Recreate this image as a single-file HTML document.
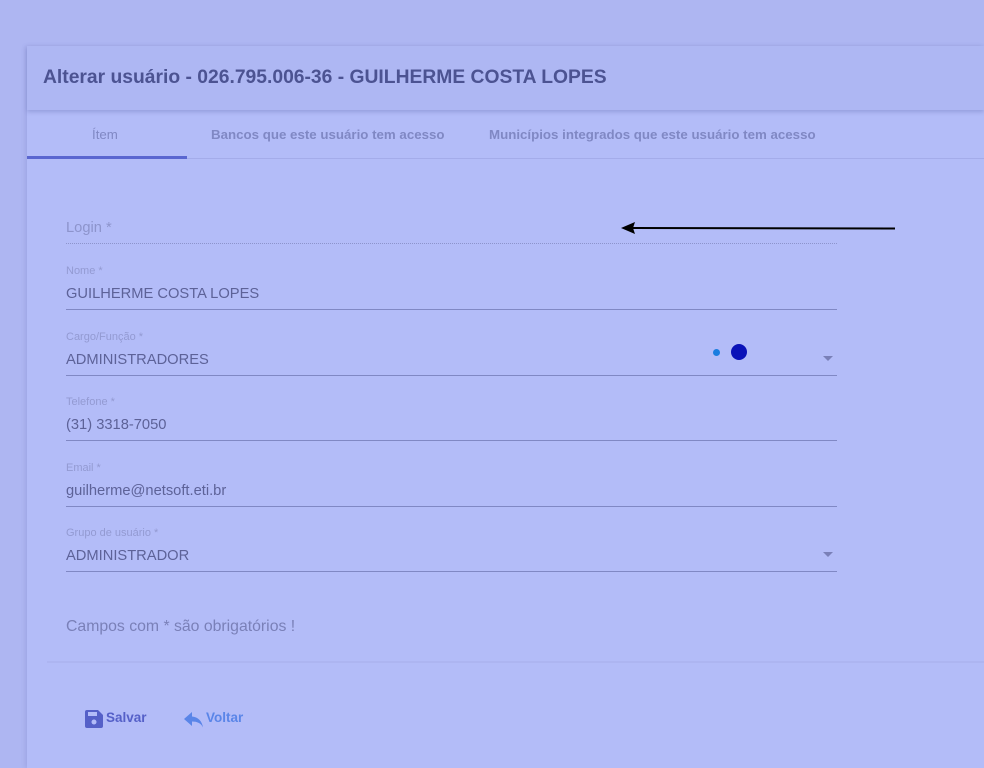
<!DOCTYPE html>
<html><head><meta charset="utf-8"><style>
*{margin:0;padding:0;box-sizing:border-box}
body{width:984px;height:768px;background:#aeb6f2;font-family:"Liberation Sans",sans-serif;position:relative;overflow:hidden}
.card{position:absolute;left:27px;top:46px;width:957px;height:722px;background:#b3bcf8;box-shadow:-2px 0 4px rgba(80,90,160,.15)}
.hdr{position:absolute;left:27px;top:46px;width:957px;height:64px;background:#aeb7f3;box-shadow:0 2px 4px rgba(80,90,160,.3)}
.hdr h1{position:absolute;left:16px;top:21px;font-size:19.3px;font-weight:bold;color:#4c5392}
.tab{position:absolute;top:127px;font-size:13.3px;font-weight:bold;color:#8088c4}
.tabline{position:absolute;left:27px;top:158px;width:957px;height:1px;background:#a4acea}
.tabact{position:absolute;left:27px;top:156px;width:160px;height:3px;background:#5a66d0}
.lbl{position:absolute;left:66px;font-size:11px;color:#939ad2}
.val{position:absolute;left:66px;font-size:14.7px;color:#5d6298}
.line{position:absolute;left:66px;width:771px;height:1px;background:#8088c4}
.caret{position:absolute;left:823px;width:0;height:0;border-left:5px solid transparent;border-right:5px solid transparent;border-top:5px solid #7a80b8}
.foot{position:absolute;left:47px;top:661px;width:937px;height:2px;background:#adb5f1}
</style></head><body>
<div class="card"></div>
<div class="hdr"><h1>Alterar usuário - 026.795.006-36 - GUILHERME COSTA LOPES</h1></div>
<div class="tab" style="left:92px;font-weight:normal">Ítem</div>
<div class="tab" style="left:211px">Bancos que este usuário tem acesso</div>
<div class="tab" style="left:489px">Municípios integrados que este usuário tem acesso</div>
<div class="tabline"></div><div class="tabact"></div>

<div class="val" style="top:220px;color:#8d94cc">Login *</div>
<div style="position:absolute;left:66px;top:243px;width:771px;border-top:1px dotted #8d94cc"></div>
<svg style="position:absolute;left:618px;top:218px" width="280" height="20"><line x1="14" y1="10" x2="277" y2="10.5" stroke="#000" stroke-width="2"/><polygon points="3,10 17,4 15,10 17,16" fill="#000"/></svg>

<div class="lbl" style="top:265px">Nome *</div>
<div class="val" style="top:286px">GUILHERME COSTA LOPES</div>
<div class="line" style="top:309px"></div>

<div class="lbl" style="top:331px">Cargo/Função *</div>
<div class="val" style="top:352px">ADMINISTRADORES</div>
<div class="caret" style="top:356px"></div>
<div style="position:absolute;left:713px;top:349px;width:7px;height:7px;border-radius:50%;background:#1a7de0"></div>
<div style="position:absolute;left:731px;top:344px;width:16px;height:16px;border-radius:50%;background:#0a12b8"></div>
<div class="line" style="top:375px"></div>

<div class="lbl" style="top:396px">Telefone *</div>
<div class="val" style="top:417px">(31) 3318-7050</div>
<div class="line" style="top:440px"></div>

<div class="lbl" style="top:462px">Email *</div>
<div class="val" style="top:483px">guilherme@netsoft.eti.br</div>
<div class="line" style="top:506px"></div>

<div class="lbl" style="top:527px">Grupo de usuário *</div>
<div class="val" style="top:548px">ADMINISTRADOR</div>
<div class="caret" style="top:552px"></div>
<div class="line" style="top:571px"></div>

<div class="val" style="top:618px;color:#7a80b8;font-size:15.8px">Campos com * são obrigatórios !</div>
<div class="foot"></div>

<svg style="position:absolute;left:85px;top:710px" width="18" height="18" viewBox="0 0 18 18"><path d="M2 0h11l5 5v11a2 2 0 0 1-2 2H2a2 2 0 0 1-2-2V2a2 2 0 0 1 2-2z" fill="#5560c8"/><rect x="3" y="2" width="9" height="4" fill="#b3bcf8"/><circle cx="9" cy="12" r="2.5" fill="#b3bcf8"/></svg>
<div style="position:absolute;left:106px;top:710px;font-size:13.5px;font-weight:bold;color:#5560c8">Salvar</div>
<svg style="position:absolute;left:184px;top:711px" width="20" height="18" viewBox="0 0 20 18"><path d="M8 1L0 8l8 7v-4.5c5 0 9 1.5 11 6C18 10 14 6 8 5.5z" fill="#5a85e8"/></svg>
<div style="position:absolute;left:206px;top:710px;font-size:13.5px;font-weight:bold;color:#5a85e8">Voltar</div>
</body></html>
